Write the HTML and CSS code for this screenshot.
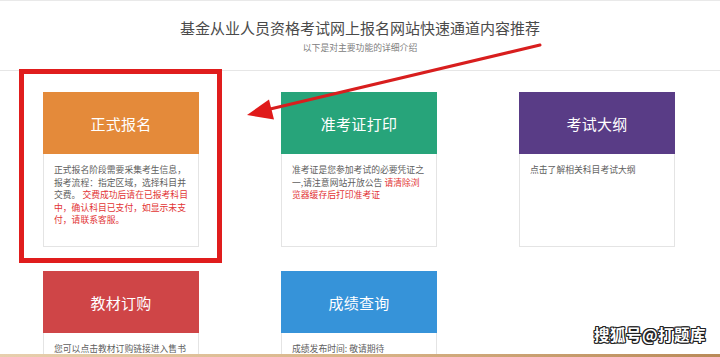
FILE: index.html
```html
<!DOCTYPE html>
<html lang="zh-CN">
<head>
<meta charset="utf-8">
<title>基金从业人员资格考试网上报名网站快速通道内容推荐</title>
<link rel="stylesheet" href="styles.css">
</head>
<body>
<div class="page">
  <header class="top">
    <h1 class="title">基金从业人员资格考试网上报名网站快速通道内容推荐</h1>
    <p class="subtitle">以下是对主要功能的详细介绍</p>
  </header>
  <main class="grid">
    <div class="card">
      <div class="card-head orange">正式报名</div>
      <div class="card-body">正式报名阶段需要采集考生信息，<br>报考流程：指定区域，选择科目并<br>交费。 <span class="red">交费成功后请在已报考科目<br>中，确认科目已支付，如显示未支<br>付，请联系客服。</span></div>
    </div>
    <div class="card">
      <div class="card-head green">准考证打印</div>
      <div class="card-body">准考证是您参加考试的必要凭证之<br>一,请注意网站开放公告 <span class="red">请清除浏<br>览器缓存后打印准考证</span></div>
    </div>
    <div class="card">
      <div class="card-head purple">考试大纲</div>
      <div class="card-body">点击了解相关科目考试大纲</div>
    </div>
    <div class="card">
      <div class="card-head crimson">教材订购</div>
      <div class="card-body">您可以点击教材订购链接进入售书</div>
    </div>
    <div class="card">
      <div class="card-head blue">成绩查询</div>
      <div class="card-body">成绩发布时间: 敬请期待</div>
    </div>
  </main>

  <div class="highlight-box"></div>
  <svg class="arrow" width="720" height="357" viewBox="0 0 720 357">
    <line x1="540" y1="45" x2="266" y2="110" stroke="#d81e1e" stroke-width="3" stroke-linecap="round"/>
    <polygon points="247,115 269,99.5 274,119.5" fill="#e01a1a"/>
  </svg>
  <div class="watermark">搜狐号@打题库</div>
  <div class="bottom-edge"></div>
</div>
</body>
</html>
```

FILE: styles.css
```css
html, body {
  margin: 0;
  padding: 0;
  background: #ffffff;
}

body {
  font-family: "Noto Sans CJK SC", "Noto Sans", sans-serif;
  width: 720px;
  height: 357px;
  overflow: hidden;
}

.page {
  position: relative;
  width: 720px;
  height: 357px;
  overflow: hidden;
}

.top {
  box-sizing: border-box;
  height: 71px;
  border-top: 1px solid #e9e9e9;
  border-bottom: 1px solid #e6e6e6;
  text-align: center;
  padding-top: 17px;
}

.title {
  margin: 0;
  font-size: 15px;
  line-height: 20px;
  font-weight: 400;
  color: #4a4a4a;
}

.subtitle {
  margin: 4px 0 0;
  font-size: 8.8px;
  line-height: 12px;
  color: #808080;
}

.grid {
  display: grid;
  grid-template-columns: repeat(3, 156px);
  column-gap: 82px;
  row-gap: 24px;
  padding: 21px 0 0 43px;
}

.card {
  height: 155px;
  box-sizing: border-box;
  border: 1px solid #e4e4e4;
  background: #ffffff;
  display: flex;
  flex-direction: column;
}

.card-head {
  height: 62px;
  margin: -1px -1px 0;
  display: flex;
  align-items: center;
  justify-content: center;
  color: #ffffff;
  font-size: 15px;
  letter-spacing: 0.3px;
}

.orange { background: #e48a3a; }
.green { background: #27a47a; }
.purple { background: #593c86; }
.crimson { background: #cf4547; }
.blue { background: #3693d9; }

.card-body {
  padding: 10px 9px 0 10px;
  font-size: 8.8px;
  line-height: 12.5px;
  color: #606060;
  white-space: nowrap;
}

.red {
  color: #e23434;
}

.highlight-box {
  position: absolute;
  left: 19px;
  top: 69px;
  width: 203px;
  height: 194px;
  box-sizing: border-box;
  border: 5px solid #e01d1d;
}

.arrow {
  position: absolute;
  left: 0;
  top: 0;
}

.watermark {
  position: absolute;
  right: 14px;
  top: 324px;
  font-size: 15.5px;
  line-height: 20px;
  font-weight: 700;
  color: #ffffff;
  letter-spacing: 0.5px;
  text-shadow: 1px 0 0 #222, -1px 0 0 #222, 0 1px 0 #222, 0 -1px 0 #222,
               1px 1px 0 #222, -1px -1px 0 #222, 1px -1px 0 #222, -1px 1px 0 #222;
}

.bottom-edge {
  position: absolute;
  left: 0;
  bottom: 0;
  width: 720px;
  height: 3px;
  background: linear-gradient(to right, #e7cfae, #d8b488 50%, #b98a58);
}
```
